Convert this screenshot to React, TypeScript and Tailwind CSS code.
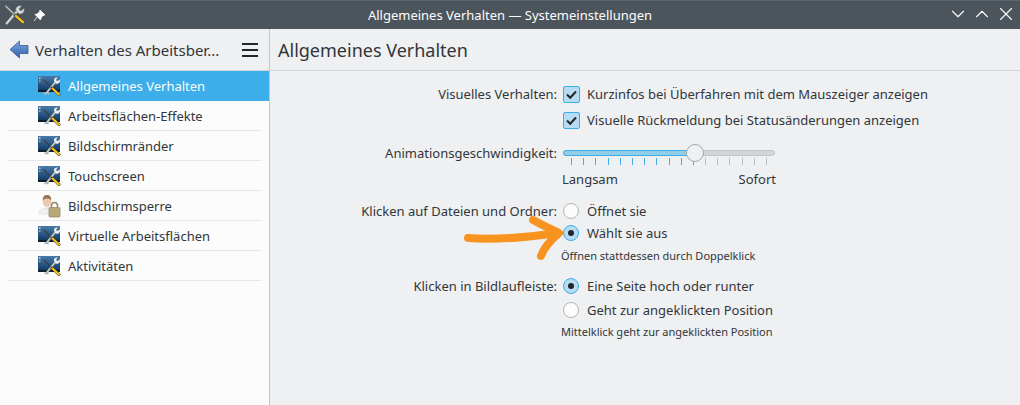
import React from 'react';
import { ChevronDown, ChevronUp, X } from 'lucide-react';

const rows = [
    { label: 'Allgemeines Verhalten', icon: 'tool', active: true },
    { label: 'Arbeitsflächen-Effekte', icon: 'tool' },
    { label: 'Bildschirmränder', icon: 'tool' },
    { label: 'Touchscreen', icon: 'tool' },
    { label: 'Bildschirmsperre', icon: 'lock' },
    { label: 'Virtuelle Arbeitsflächen', icon: 'tool' },
    { label: 'Aktivitäten', icon: 'tool' },
];

const Tools = () => (
    <svg width="20" height="20" viewBox="0 0 24 24" className="shrink-0">
        <path d="M1 1.5 L12 12" stroke="#7d8287" strokeWidth="2.4" strokeLinecap="round" />
        <path d="M1 1.5 L12 12" stroke="#e4e6e7" strokeWidth="1.1" strokeLinecap="round" />
        <path d="M2 22 L15 7" stroke="#6f7478" strokeWidth="3.6" strokeLinecap="round" />
        <path d="M2 22 L15 7" stroke="#d5d8d9" strokeWidth="2.4" strokeLinecap="round" />
        <path d="M12.5 12.5 L21.5 20.5" stroke="#3b3f42" strokeWidth="4.4" strokeLinecap="round" />
        <path d="M13 13 L21.5 20.5" stroke="#f2c21a" strokeWidth="3" strokeLinecap="round" />
        <path d="M13 6 C12.5 2.5 16.5 0 20 1.2 L17 4.2 L17.6 6.4 L19.8 7 L22.8 4 C24 7.5 21 11.5 17 10.8 Z" fill="#d9dcdd" stroke="#75797d" strokeWidth="0.6" />
    </svg>
);

const ScreenTool = () => (
    <svg width="23" height="20" viewBox="0 0 23 20" className="shrink-0">
        <defs>
            <linearGradient id="scr" x1="0" y1="0" x2="0" y2="1">
                <stop offset="0" stopColor="#4a7ba8" />
                <stop offset="0.65" stopColor="#1f4d7c" />
                <stop offset="1" stopColor="#14304a" />
            </linearGradient>
        </defs>
        <rect x="0" y="0" width="22" height="16" fill="url(#scr)" />
        <rect x="1" y="1.5" width="1.5" height="1.5" fill="#c9d6df" />
        <rect x="1" y="4.5" width="1.5" height="1.5" fill="#7fc08a" />
        <rect x="0" y="14" width="22" height="2" fill="#10202f" />
        <path d="M6 17.5 H11" stroke="#c9d0d4" strokeWidth="1.4" />
        <path d="M6 4 L14 12" stroke="#3a3f43" strokeWidth="1.3" />
        <path d="M8 17.5 L17 6.5" stroke="#6b7074" strokeWidth="2.2" />
        <path d="M8 17.5 L17 6.5" stroke="#d5d8d9" strokeWidth="1.2" />
        <path d="M14 12 L21 18.5" stroke="#2a2e31" strokeWidth="3" strokeLinecap="round" />
        <path d="M14.5 12.5 L21 18.5" stroke="#f5c518" strokeWidth="2.2" strokeLinecap="round" />
        <path d="M16 5 a3 3 0 0 1 4 -3.4 l-1.8 1.9 l.4 1.2 l1.2 .4 l1.8 -1.9 a3 3 0 0 1 -4 4.2 z" fill="#eceeef" />
    </svg>
);

const UserLock = () => (
    <svg width="23" height="24" viewBox="0 0 23 24" className="shrink-0">
        <path d="M1 20 C1 15 5 14 11 14 C16 14 18 16 18 20 Z" fill="#eef0f2" stroke="#cfd3d6" strokeWidth="0.5" />
        <ellipse cx="9" cy="7.5" rx="4.3" ry="5.6" fill="#eec9ae" />
        <path d="M4.8 6.5 C4.5 2 7 1 9 1 C12 1 13.5 3 13.2 6.5 C12 4 7 3.5 4.8 6.5 Z" fill="#9a7552" />
        <path d="M13.5 14 V11.5 a3 3 0 0 1 6 0 V14" fill="none" stroke="#8f8a70" strokeWidth="1.6" />
        <rect x="11" y="13.5" width="11" height="9.5" rx="1" fill="#b9a877" stroke="#85784f" strokeWidth="0.6" />
    </svg>
);

const Checkbox = () => (
    <span className="flex h-[17px] w-[17px] shrink-0 items-center justify-center rounded-[2px] border border-[#3daee9] bg-[#b5dcf3]">
        <svg width="13" height="13" viewBox="0 0 13 13">
            <path d="M2 6.5 L5.2 9.7 L11 3.5" fill="none" stroke="#232629" strokeWidth="2" />
        </svg>
    </span>
);

const Radio = ({ on }: { on?: boolean }) =>
    on ? (
        <span className="flex h-4 w-4 shrink-0 items-center justify-center rounded-full border border-[#3daee9] bg-[#b5dcf3]">
            <span className="h-1.5 w-1.5 rounded-full bg-[#232629]" />
        </span>
    ) : (
        <span className="h-4 w-4 shrink-0 rounded-full border border-[#b3b5b6] bg-[#fcfcfc]" />
    );

const Row = ({ label, children, className = '' }: { label?: string; children: React.ReactNode; className?: string }) => (
    <div className={`flex items-center ${className}`}>
        <div className="w-[293px] shrink-0 pr-[6px] text-right">{label}</div>
        <div className="flex items-center gap-2">{children}</div>
    </div>
);

const ticks = Array.from({ length: 17 });

const App: React.FC = () => {
    return (
        <div className="relative flex h-[405px] w-[1020px] flex-col overflow-hidden bg-[#eff0f1] font-['Noto_Sans',sans-serif] text-[13px] leading-[18px] text-[#31363b]">
            {/* title bar */}
            <div className="flex h-[29px] shrink-0 items-center border-t border-[#5d666d] bg-[#4d555c] text-[#fcfcfc]">
                <div className="flex w-[330px] items-center gap-2 pl-[5px]">
                    <Tools />
                    <svg width="13" height="13" viewBox="0 0 13 13">
                        <path d="M7 1 L12 6 L10 6.5 L8 9 L7.5 11 L2 5.5 L4 5 L6.5 3 Z M4 8 L1 12" fill="#fcfcfc" stroke="#fcfcfc" strokeWidth="0.8" />
                    </svg>
                </div>
                <div className="w-[360px] text-center">Allgemeines Verhalten — Systemeinstellungen</div>
                <div className="mb-[2px] ml-auto flex items-center gap-[2px] pr-[3px]">
                    <ChevronDown size={22} strokeWidth={1.2} />
                    <ChevronUp size={22} strokeWidth={1.2} />
                    <X size={22} strokeWidth={1.2} />
                </div>
            </div>

            <div className="flex min-h-0 flex-1">
                {/* sidebar */}
                <div className="flex w-[270px] shrink-0 flex-col border-r border-[#c4c6c7]">
                    <div className="flex h-[42px] shrink-0 items-center border-b border-[#d5d6d7] pl-[9px] pr-[11px]">
                        <svg width="20" height="19" viewBox="0 0 20 19" className="shrink-0">
                            <defs>
                                <linearGradient id="back" x1="0" y1="0" x2="0" y2="1">
                                    <stop offset="0" stopColor="#7fa9e0" />
                                    <stop offset="1" stopColor="#2f5fa8" />
                                </linearGradient>
                            </defs>
                            <path d="M1 9.5 L10.5 1 V5.5 H19 V13.5 H10.5 V18 Z" fill="url(#back)" stroke="#2a4f8c" strokeWidth="0.7" />
                        </svg>
                        <span className="ml-[6px] text-[15px]">Verhalten des Arbeitsber...</span>
                        <span className="ml-auto flex w-4 flex-col gap-1">
                            <span className="h-0.5 bg-[#232629]" />
                            <span className="h-0.5 bg-[#232629]" />
                            <span className="h-0.5 bg-[#232629]" />
                        </span>
                    </div>
                    <div className="flex-1 bg-[#fcfcfc]">
                        {rows.map((row) => (
                            <div key={row.label} className={row.active ? 'bg-[#3daee9] text-[#fcfcfc]' : 'px-2'}>
                                <div className={`flex h-[30px] items-center ${row.active ? 'pl-[38px]' : 'border-b border-[#e5e6e6] pl-[30px]'}`}>
                                    <span className="flex w-[30px] shrink-0 items-center">
                                        {row.icon === 'tool' ? <ScreenTool /> : <UserLock />}
                                    </span>
                                    {row.label}
                                </div>
                            </div>
                        ))}
                    </div>
                </div>

                {/* content */}
                <div className="flex min-w-0 flex-1 flex-col">
                    <div className="flex h-[42px] shrink-0 items-center border-b border-[#d5d6d7] pl-2 text-[18px]">
                        Allgemeines Verhalten
                    </div>
                    <div className="pt-[10px]">
                        <Row label="Visuelles Verhalten:" className="h-[26px]">
                            <Checkbox />
                            <span className="-ml-px">Kurzinfos bei Überfahren mit dem Mauszeiger anzeigen</span>
                        </Row>
                        <Row className="h-[26px]">
                            <Checkbox />
                            <span className="-ml-px">Visuelle Rückmeldung bei Statusänderungen anzeigen</span>
                        </Row>

                        <Row label="Animationsgeschwindigkeit:" className="mt-[15px] h-[10px]">
                            <div className="relative h-[6px] w-[212px] rounded-full border border-[#c2c4c5] bg-[#d4d5d6]">
                                <div className="absolute -left-px -top-px h-[6px] w-[132px] rounded-full border border-[#3daee9] bg-[#93cee9]" />
                                <div className="absolute left-[122px] top-[-7px] h-[18px] w-[18px] rounded-full border border-[#a6a8a9] bg-[#eff0f1]" />
                            </div>
                        </Row>
                        <div className="ml-[293px] flex h-[7px] w-[212px] justify-between px-[8px]">
                            {ticks.map((_, i) => (
                                <span key={i} className={`h-[7px] w-px ${i < 11 ? 'bg-[#3daee9]' : 'bg-[#b9bbbc]'}`} />
                            ))}
                        </div>
                        <div className="ml-[292px] mt-[5px] flex w-[214px] justify-between">
                            <span>Langsam</span>
                            <span>Sofort</span>
                        </div>

                        <Row label="Klicken auf Dateien und Ordner:" className="mt-[12px] h-[22px]">
                            <Radio />
                            <span>Öffnet sie</span>
                        </Row>
                        <Row className="h-[22px]">
                            <Radio on />
                            <span>Wählt sie aus</span>
                        </Row>
                        <Row className="mt-[2px] h-[20px]">
                            <span className="-ml-[2px] text-[11px]">Öffnen stattdessen durch Doppelklick</span>
                        </Row>

                        <Row label="Klicken in Bildlaufleiste:" className="mt-[9px] h-[22px]">
                            <Radio on />
                            <span>Eine Seite hoch oder runter</span>
                        </Row>
                        <Row className="mt-[2px] h-[22px]">
                            <Radio />
                            <span>Geht zur angeklickten Position</span>
                        </Row>
                        <Row className="mt-px h-[20px]">
                            <span className="-ml-[2px] text-[11px]">Mittelklick geht zur angeklickten Position</span>
                        </Row>
                    </div>
                </div>
            </div>

            {/* hand drawn arrow over the options */}
            <svg width="110" height="50" viewBox="0 0 110 50" className="absolute left-[460px] top-[212px]">
                <path
                    d="M8 26 C30 28 62 26 98 21 M73 8 C82 13 91 17 99 21 C92 27 84 35 81 44"
                    fill="none"
                    stroke="#f7931e"
                    strokeWidth="8"
                    strokeLinecap="round"
                    strokeLinejoin="round"
                />
            </svg>
        </div>
    );
};

export default App;
